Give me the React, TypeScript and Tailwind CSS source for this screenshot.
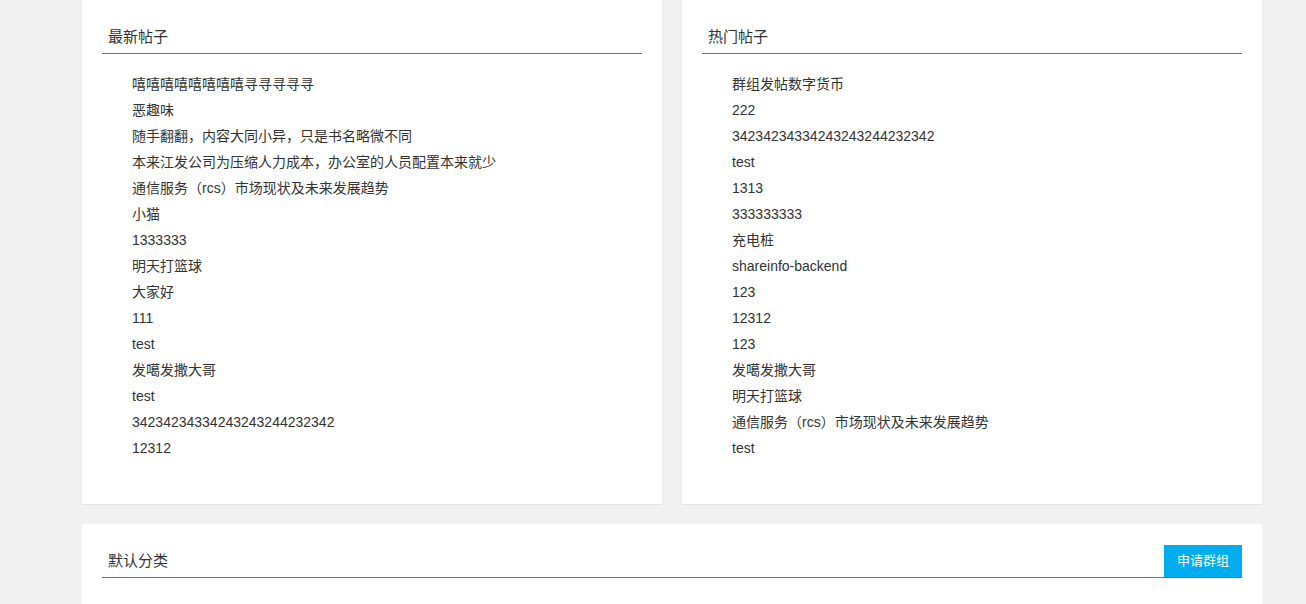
import React from 'react'

const latestPosts = [
  '嘻嘻嘻嘻嘻嘻嘻嘻寻寻寻寻寻',
  '恶趣味',
  '随手翻翻，内容大同小异，只是书名略微不同',
  '本来江发公司为压缩人力成本，办公室的人员配置本来就少',
  '通信服务（rcs）市场现状及未来发展趋势',
  '小猫',
  '1333333',
  '明天打篮球',
  '大家好',
  '111',
  'test',
  '发噶发撒大哥',
  'test',
  '34234234334243243244232342',
  '12312',
]

const hotPosts = [
  '群组发帖数字货币',
  '222',
  '34234234334243243244232342',
  'test',
  '1313',
  '333333333',
  '充电桩',
  'shareinfo-backend',
  '123',
  '12312',
  '123',
  '发噶发撒大哥',
  '明天打篮球',
  '通信服务（rcs）市场现状及未来发展趋势',
  'test',
]

const PostCard = ({ title, posts }: { title: string; posts: string[] }) => (
  <div className="bg-white px-5 pt-5 pb-5 shadow-[0_1px_1px_rgba(0,0,0,0.06)]">
    <div className="flex h-[34px] items-center border-b border-[#1e87df] pt-[2px] pl-[6px] text-[15px] text-[#333]">
      {title}
    </div>
    <ul className="mt-[17px] mb-[23px] pl-[30px]">
      {posts.map((post, i) => (
        <li key={i} className="text-[14px] leading-[26px] text-[#333]">
          {post}
        </li>
      ))}
    </ul>
  </div>
)

export default function App() {
  return (
    <div
      className="min-h-screen bg-[#f1f1f1] pl-[82px]"
      style={{ fontFamily: '"Liberation Sans", Arial, "Noto Sans CJK SC", sans-serif' }}
    >
      <div className="w-[1180px]">
        <div className="grid grid-cols-2 gap-5">
          <PostCard title="最新帖子" posts={latestPosts} />
          <PostCard title="热门帖子" posts={hotPosts} />
        </div>
        <div className="mt-5 h-[200px] bg-white px-5 pt-5">
          <div className="flex h-[34px] items-center justify-between border-b border-[#1e87df]">
            <span className="pt-[2px] pl-[6px] text-[15px] text-[#333]">默认分类</span>
            <button className="h-8 self-end bg-[#00adef] px-[13px] text-[13px] text-white">
              申请群组
            </button>
          </div>
        </div>
      </div>
    </div>
  )
}
